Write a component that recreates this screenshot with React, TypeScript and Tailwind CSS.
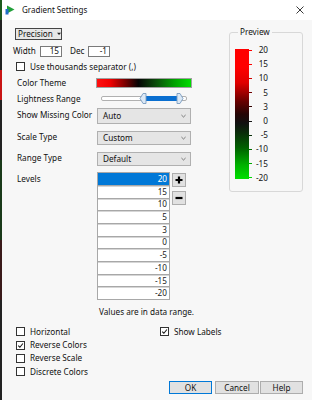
import React from "react";

function Check({ checked, label }: { checked?: boolean; label: string }) {
  return (
    <div className="flex items-center h-[13.3px]">
      <div className="w-[9px] h-[9px] border border-[#333333] bg-white flex items-center justify-center shrink-0">
        {checked && (
          <svg viewBox="0 0 9 9" className="w-[9px] h-[9px]">
            <path d="M1.6 4.6 L3.7 6.7 L7.6 1.9" stroke="#111" strokeWidth="1.3" fill="none" />
          </svg>
        )}
      </div>
      <span className="ml-[5px] leading-none">{label}</span>
    </div>
  );
}

function Select({ value, h }: { value: string; h: string }) {
  return (
    <div className={`w-[94px] ${h} bg-[#e5e5e5] border border-[#b0b0b0] flex items-center justify-between pl-[5px] pr-[4px]`}>
      <span className="leading-none">{value}</span>
      <svg viewBox="0 0 6 4" className="w-[5px] h-[4px]">
        <path d="M0.5 0.8 L3 3.2 L5.5 0.8" stroke="#555" strokeWidth="0.9" fill="none" />
      </svg>
    </div>
  );
}

function Btn({ label, w, primary }: { label: string; w: string; primary?: boolean }) {
  return (
    <div
      className={`${w} h-[13px] flex items-center justify-center bg-[#e1e1e1] border ${
        primary ? "border-[#0078d7]" : "border-[#adadad]"
      }`}
    >
      <span className="leading-none">{label}</span>
    </div>
  );
}

const levels = ["20", "15", "10", "5", "3", "0", "-5", "-10", "-15", "-20"];
const tickColors = ["#ff0000", "#ff0000", "#d00000", "#700000", "#300000", "#151515", "#0a300a", "#006a00", "#00aa00", "#00d800"];

export default function App() {
  return (
    <div className="w-[312px] h-[400px] flex overflow-hidden font-['Noto_Sans',sans-serif] text-[8.2px] text-[#111]">
      <div className="w-[2px] flex flex-col shrink-0">
        <div className="h-[20px] bg-[#1d5a1d]" />
        <div className="h-[50px] bg-[#202020]" />
        <div className="h-[30px] bg-[#c81414]" />
        <div className="h-[60px] bg-[#222222]" />
        <div className="h-[80px] bg-[#1a3a1a]" />
        <div className="h-[60px] bg-[#3a1a1a]" />
        <div className="flex-1 bg-[#222222]" />
      </div>
      <div className="flex-1 flex flex-col bg-[#f7f7f7]">
        {/* title bar */}
        <div className="h-[20px] bg-white flex items-center shrink-0">
          <svg viewBox="0 0 10 10" className="w-[10px] h-[10px] ml-[3px]">
            <path d="M2 0.5 L9.5 4.5 L2 8.5 Z" fill="#22a03a" />
            <rect x="0.5" y="4" width="3" height="5.5" fill="#2070c8" />
          </svg>
          <span className="ml-[7px] text-[8px] leading-none">Gradient Settings</span>
          <div className="flex-1" />
          <svg viewBox="0 0 8 8" className="w-[8px] h-[8px] mr-[8px]">
            <path d="M0.5 0.5 L7.5 7.5 M7.5 0.5 L0.5 7.5" stroke="#222" strokeWidth="0.9" />
          </svg>
        </div>

        {/* body */}
        <div className="flex-1 flex flex-col">
          <div className="flex items-start">
            {/* left column */}
            <div className="w-[227px] flex flex-col shrink-0">
              <div className="mt-[8px] ml-[13px] w-[47px] h-[12px] border border-[#444] bg-[#e6e6e6] flex items-center pl-[2px]">
                <span className="leading-none">Precision</span>
                <svg viewBox="0 0 6 4" className="w-[6px] h-[4px] ml-[4px]">
                  <path d="M0 0 L6 0 L3 3.5 Z" fill="#222" />
                </svg>
              </div>
              <div className="mt-[6px] h-[11px] flex items-center ml-[11px]">
                <span className="leading-none w-[27px]">Width</span>
                <div className="w-[22px] h-[11px] bg-white border border-[#7a7a7a] flex items-center justify-end pr-[2px]">
                  <span className="leading-none">15</span>
                </div>
                <span className="leading-none ml-[8px] w-[18px]">Dec</span>
                <div className="w-[22px] h-[11px] bg-white border border-[#7a7a7a] flex items-center justify-end pr-[2px]">
                  <span className="leading-none">-1</span>
                </div>
              </div>
              <div className="mt-[3px] ml-[14px]">
                <Check label="Use thousands separator (,)" />
              </div>

              <div className="mt-[5px] h-[10px] flex items-center ml-[15px]">
                <span className="w-[79px] leading-none">Color Theme</span>
                <div className="w-[96px] h-[10px] border border-[#a0a0a0] bg-[linear-gradient(to_right,#ff1010_0%,#f00000_14%,#7a0000_30%,#050505_44%,#0a4a0a_62%,#00a000_82%,#00dd00_100%)]" />
              </div>

              <div className="mt-[4px] h-[13px] flex items-center ml-[15px]">
                <span className="w-[84px] leading-none">Lightness Range</span>
                <div className="relative w-[86px] h-[13px] flex items-center">
                  <div className="w-[86px] h-[5px] border border-[#b0b0b0] bg-white rounded-[2px]" />
                  <div className="absolute left-[42px] top-[4px] w-[35px] h-[5px] bg-[#0a6fd0]" />
                  <svg viewBox="0 0 8 13" className="absolute left-[38px] top-0 w-[8px] h-[13px]">
                    <path d="M7 1.5 L7 11.5 L4 11.5 L1 6.5 L4 1.5 Z" fill="#dbe8f5" stroke="#7a9cc0" strokeWidth="0.9" />
                  </svg>
                  <svg viewBox="0 0 8 13" className="absolute left-[75px] top-0 w-[8px] h-[13px]">
                    <path d="M1 1.5 L1 11.5 L4 11.5 L7 6.5 L4 1.5 Z" fill="#dbe8f5" stroke="#7a9cc0" strokeWidth="0.9" />
                  </svg>
                </div>
              </div>

              <div className="mt-[3px] h-[16px] flex items-center ml-[15px]">
                <span className="w-[80px] leading-none -mt-[3px]">Show Missing Color</span>
                <Select value="Auto" h="h-[16px]" />
              </div>
              <div className="mt-[7px] h-[14px] flex items-center ml-[15px]">
                <span className="w-[80px] leading-none -mt-[3px]">Scale Type</span>
                <Select value="Custom" h="h-[14px]" />
              </div>
              <div className="mt-[7px] h-[14px] flex items-center ml-[15px]">
                <span className="w-[80px] leading-none -mt-[3px]">Range Type</span>
                <Select value="Default" h="h-[14px]" />
              </div>

              <div className="mt-[6px] flex items-start ml-[15px]">
                <span className="w-[80px] leading-none mt-[3px]">Levels</span>
                <div className="w-[73px] border-l border-r border-b border-[#a8a8a8] flex flex-col">
                  {levels.map((v, i) => (
                    <div
                      key={v}
                      className={`h-[12.7px] flex items-center justify-end pr-[2px] border-t border-[#a8a8a8] ${
                        i === 0 ? "bg-[#0078d7] text-white" : "bg-white text-[#1a1a1a] shadow-[inset_0_1px_0_#d6d6d6]"
                      }`}
                    >
                      <span className="leading-none">{v}</span>
                    </div>
                  ))}
                </div>
                <div className="ml-[2px] mt-[1px] flex flex-col gap-[4px]">
                  <div className="w-[14px] h-[14px] bg-[#e1e1e1] border border-[#adadad] flex items-center justify-center">
                    <svg viewBox="0 0 8 8" className="w-[8px] h-[8px]">
                      <path d="M4 0.5 L4 7.5 M0.5 4 L7.5 4" stroke="#000" strokeWidth="2.2" />
                    </svg>
                  </div>
                  <div className="w-[14px] h-[14px] bg-[#e1e1e1] border border-[#adadad] flex items-center justify-center">
                    <svg viewBox="0 0 8 8" className="w-[8px] h-[8px]">
                      <path d="M0.5 4 L7.5 4" stroke="#000" strokeWidth="2.2" />
                    </svg>
                  </div>
                </div>
              </div>
            </div>

            {/* preview */}
            <fieldset className="mt-[7px] w-[74px] border border-[#d8d8d8] rounded-[3px] px-[5px] pb-[8px]">
              <legend className="ml-[3px] px-[2px] h-[10px] leading-[10px]">Preview</legend>
              <div className="mt-[8px] flex items-center">
                <div className="w-[14px] h-[130px] bg-[linear-gradient(to_bottom,#ff0000_0%,#ff0000_14%,#e00000_26%,#6a0000_40%,#250505_50%,#101010_57%,#0a2a0a_64%,#006000_76%,#00b000_89%,#00e000_100%)]" />
                <div className="h-[138px] flex flex-col justify-between">
                  {levels.map((v, i) => (
                    <div key={v} className="h-[10px] flex items-center">
                      <div className="w-[3px] h-[1px]" style={{ backgroundColor: tickColors[i] }} />
                      <span className="w-[16px] text-right leading-none">{v}</span>
                    </div>
                  ))}
                </div>
              </div>
            </fieldset>
          </div>

          <div className="mt-[7px] ml-[97px] h-[10px] flex items-center">
            <span className="leading-none">Values are in data range.</span>
          </div>

          <div className="mt-[8px] flex">
            <div className="ml-[14px] w-[144px] flex flex-col">
              <Check label="Horizontal" />
              <Check label="Reverse Colors" checked />
              <Check label="Reverse Scale" />
              <Check label="Discrete Colors" />
            </div>
            <div className="flex flex-col">
              <Check label="Show Labels" checked />
            </div>
          </div>

          <div className="mt-[3px] flex justify-end pr-[9px]">
            <Btn label="OK" w="w-[43px]" primary />
            <div className="w-[3px]" />
            <Btn label="Cancel" w="w-[44px]" />
            <div className="w-[1px]" />
            <Btn label="Help" w="w-[43px]" />
          </div>
        </div>
      </div>
    </div>
  );
}
